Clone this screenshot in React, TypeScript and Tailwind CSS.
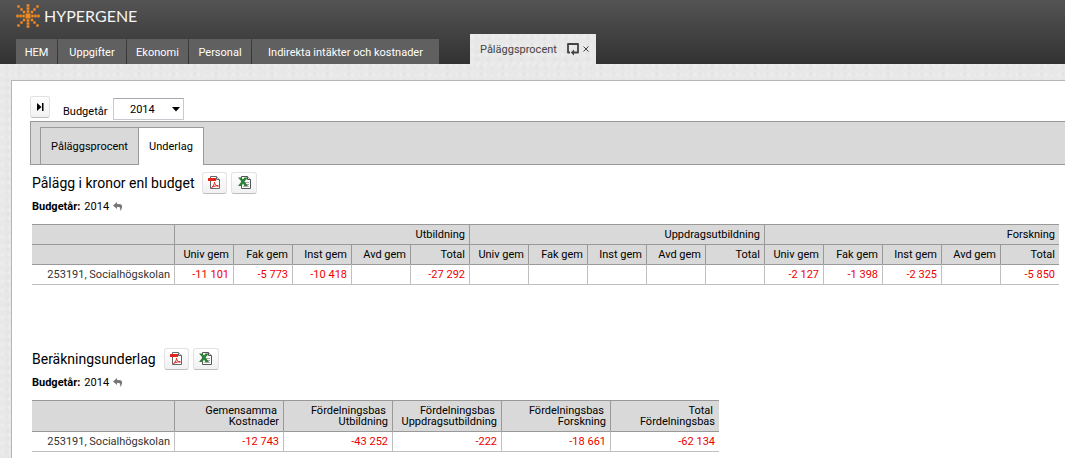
const NAV = [
  { label: 'HEM', width: 'min-w-[41px]' },
  { label: 'Uppgifter', width: 'min-w-[68px]' },
  { label: 'Ekonomi', width: 'min-w-[61px]' },
  { label: 'Personal', width: 'min-w-[62px]' },
  { label: 'Indirekta intäkter och kostnader', width: 'min-w-[187px]' },
]

const GROUPS = [
  { label: 'Utbildning', values: ['-11 101', '-5 773', '-10 418', '', '-27 292'] },
  { label: 'Uppdragsutbildning', values: ['', '', '', '', ''] },
  { label: 'Forskning', values: ['-2 127', '-1 398', '-2 325', '', '-5 850'] },
]

const COLUMNS = ['Univ gem', 'Fak gem', 'Inst gem', 'Avd gem', 'Total']

const BASIS = [
  { lines: ['Gemensamma', 'Kostnader'], value: '-12 743' },
  { lines: ['Fördelningsbas', 'Utbildning'], value: '-43 252' },
  { lines: ['Fördelningsbas', 'Uppdragsutbildning'], value: '-222' },
  { lines: ['Fördelningsbas', 'Forskning'], value: '-18 661' },
  { lines: ['Total', 'Fördelningsbas'], value: '-62 134' },
]

const TEXTURE =
  'bg-[#e8e8e8] bg-[radial-gradient(circle_at_30%_30%,#f0f0f080_1px,transparent_3px),radial-gradient(circle_at_70%_60%,#dededf80_1px,transparent_3px)] bg-[size:7px_9px,11px_7px]'

const ICON_BUTTON =
  'flex h-[22px] items-center justify-center rounded-[3px] border border-[#e2e2e2] border-b-[#bdbdbd] bg-linear-to-b from-white to-[#f1f1f1]'

const HEAD_CELL = 'border-t border-l border-[#999] bg-[#d9d9d9] px-1 font-normal'
const BODY_CELL = 'border-y border-l border-[#c0c0c0] border-t-[#999] px-1 text-[#ee0000]'

// Offsets of the dots on one straight and one diagonal ray
const STRAIGHT = [4.5, 7.5, 10.5]
const DIAGONAL = [4, 6.5, 9.5]

function Logo() {
  return (
    <svg width="24" height="24" viewBox="-12 -12 24 24" fill="#f58a1f" aria-hidden="true">
      <rect x="-2.5" y="-2.5" width="5" height="5" />
      {[0, 90, 180, 270].map((angle) => (
        <g key={angle} transform={`rotate(${angle})`}>
          {STRAIGHT.map((d) => (
            <rect key={d} x={d - 1.2} y="-1.4" width="2.4" height="2.8" />
          ))}
          {DIAGONAL.map((d) => (
            <rect key={d} x={d - 1.2} y={d - 1.2} width="2.400" height="2.400" />
          ))}
        </g>
      ))}
    </svg>
  )
}

function PdfIcon() {
  return (
    <svg width="13" height="14" viewBox="0 0 13 14" aria-hidden="true">
      <path d="M2.5.5h6l3 3v9h-9z" fill="#fff" stroke="#666" />
      <path d="M8.5.5v3h3" fill="#ddd" stroke="#666" />
      <path d="M0 2h8v3H0z" fill="#e5231b" />
      <path d="M3.500 11.500c2-1.500 3-3.500 3-5.500 0 2 1.500 4 4 4-2-.5-5 .2-7 1.500z" fill="none" stroke="#e5231b" />
    </svg>
  )
}

function ExcelIcon() {
  return (
    <svg width="13" height="14" viewBox="0 0 13 14" aria-hidden="true">
      <path d="M3.500.5h6l3 3v9h-9z" fill="#fff" stroke="#555" />
      <path d="M9.500.5v3h3" fill="#ddd" stroke="#555" />
      <path d="M7 6.500h4M7 8.500h4M5 10.500h6" stroke="#aaa" />
      <path d="M0 1.500h3.500L5 3.500l1.500-2H10L6.500 5.500 10 10H6.500L5 7.500 3.500 10H0l3.500-4.500z" fill="#2b8138" />
    </svg>
  )
}

function Section({ title, children }: { title: string; children: React.ReactNode }) {
  return (
    <section>
      <div className="flex h-[22px] items-center">
        <h2 className="mr-2 text-[14px]">{title}</h2>
        <button aria-label="PDF" className={`${ICON_BUTTON} mr-1 w-[25px]`}>
          <PdfIcon />
        </button>
        <button aria-label="Excel" className={`${ICON_BUTTON} w-[26px]`}>
          <ExcelIcon />
        </button>
      </div>
      <p className="mt-[3px] mb-[9px] flex h-[18px] items-center gap-1">
        <b className="font-bold">Budgetår:</b>
        <span>2014</span>
        <button aria-label="Återställ">
          <svg width="10" height="9" viewBox="0 0 10 9" aria-hidden="true">
            <path d="M4 0v2h2c2.500 0 3.500 1.500 3 3.500C8.800 7 8 8 7 9c.5-2 .5-4-1.500-4H4v2L0 3.500z" fill="#777" />
          </svg>
        </button>
      </p>
      {children}
    </section>
  )
}

export default function App() {
  return (
    <div className={`flex min-h-screen flex-col overflow-x-hidden font-[Roboto,sans-serif] text-[11px] leading-[13px] text-black ${TEXTURE}`}>
      <header className="bg-linear-to-b from-[#545454] to-[#323232] pl-4">
        <a href="#" className="flex h-[34px] items-center gap-1 pb-[2px] text-[#f4f4f4]">
          <Logo />
          <span className="font-[Lato,sans-serif] text-[16px] leading-4">HYPERGENE</span>
        </a>
        <div className="flex items-end">
          <nav className="flex gap-px">
            {NAV.map((item) => (
              <a
                key={item.label}
                href="#"
                className={`flex h-[25px] items-center justify-center bg-[#606060] pt-px text-white ${item.width}`}
              >
                {item.label}
              </a>
            ))}
          </nav>
          <div className={`ml-[31px] flex h-[30px] w-[126px] items-center pl-[10px] text-[#444] ${TEXTURE}`}>
            <a href="#" className="w-[87px]">Påläggsprocent</a>
            <button aria-label="Öppna i nytt fönster">
              <svg width="12" height="13" viewBox="0 0 12 13" fill="none" aria-hidden="true">
                <path d="M3 9.500H1V1h10v8.500H6" stroke="#444" strokeWidth="1.800" strokeLinejoin="round" />
                <path d="M7 6.500v6L3.800 9.500z" fill="#444" />
              </svg>
            </button>
            <button aria-label="Stäng" className="ml-1">
              <svg width="6" height="6" viewBox="0 0 6 6" stroke="#444" aria-hidden="true">
                <path d="M.5.5l5 5M5.500.5l-5 5" />
              </svg>
            </button>
          </div>
        </div>
      </header>

      <main className="mt-4 ml-[11px] flex-1 border-t border-l border-[#b5b5b5] bg-white pt-[15px] pl-[18px]">
        <div className="flex items-start">
          <button aria-label="Visa filter" className={`${ICON_BUTTON} w-5`}>
            <svg width="7" height="8" viewBox="0 0 7 8" aria-hidden="true">
              <path d="M0 0l4.500 4L0 8zM5 0h1.500v8H5z" />
            </svg>
          </button>
          <label htmlFor="year" className="mt-[9px] ml-[13px] w-[50px]">Budgetår</label>
          <div className="relative mt-[2px] mb-px">
            <select
              id="year"
              className="h-[22px] w-[71px] appearance-none border border-[#c9c9d2] border-t-[#a8a8b0] bg-white pl-4"
            >
              <option>2014</option>
            </select>
            <svg className="pointer-events-none absolute top-[9px] right-1" width="8" height="5" viewBox="0 0 8 5" aria-hidden="true">
              <path d="M0 0h8L4 4.500z" />
            </svg>
          </div>
        </div>

        <div className="flex h-11 items-end border border-r-0 border-[#999] bg-[#d9d9d9] pl-[9px]">
          <a href="#" className="flex h-[37px] w-[98px] items-center justify-center border-t border-l border-[#999]">
            Påläggsprocent
          </a>
          <a href="#" className="-mb-px flex h-[38px] w-[66px] items-center justify-center border border-b-0 border-[#999] bg-white">
            Underlag
          </a>
        </div>

        <div className="flex flex-col gap-[63px] pt-[7px] pr-[6px] pb-2 pl-[2px]">
          <Section title="Pålägg i kronor enl budget">
            <table className="w-full table-fixed border-separate border-spacing-0 text-right">
              <colgroup>
                <col className="w-[142px]" />
                <col span={15} />
              </colgroup>
              <thead>
                <tr className="h-5">
                  <td className="border-t border-[#999] bg-[#d9d9d9]" />
                  {GROUPS.map((group) => (
                    <th key={group.label} colSpan={5} className={HEAD_CELL}>
                      {group.label}
                    </th>
                  ))}
                </tr>
                <tr className="h-5">
                  <td className="border-t border-[#999] bg-[#d9d9d9]" />
                  {GROUPS.map((group) =>
                    COLUMNS.map((column) => (
                      <th key={group.label + column} className={HEAD_CELL}>
                        {column}
                      </th>
                    )),
                  )}
                </tr>
              </thead>
              <tbody>
                <tr className="h-[21px]">
                  <th className="border-y border-[#c0c0c0] border-t-[#999] pr-1 font-normal text-[#333]">
                    253191, Socialhögskolan
                  </th>
                  {GROUPS.map((group) =>
                    group.values.map((value, i) => (
                      <td key={group.label + i} className={BODY_CELL}>
                        {value}
                      </td>
                    )),
                  )}
                </tr>
              </tbody>
            </table>
          </Section>

          <Section title="Beräkningsunderlag">
            <table className="w-[687px] table-fixed border-separate border-spacing-0 text-right">
              <colgroup>
                <col className="w-[142px]" />
                <col span={5} />
              </colgroup>
              <thead>
                <tr className="h-[31px] leading-[11px]">
                  <td className="border-t border-[#999] bg-[#d9d9d9]" />
                  {BASIS.map((item) => (
                    <th key={item.lines.join(' ')} className={HEAD_CELL}>
                      <span className="block pr-[2px]">{item.lines[0]}</span>
                      <span className="block">{item.lines[1]}</span>
                    </th>
                  ))}
                </tr>
              </thead>
              <tbody>
                <tr className="h-[21px]">
                  <th className="border-y border-[#c0c0c0] border-t-[#999] pr-1 font-normal text-[#333]">
                    253191, Socialhögskolan
                  </th>
                  {BASIS.map((item) => (
                    <td key={item.lines.join(' ')} className={BODY_CELL}>
                      {item.value}
                    </td>
                  ))}
                </tr>
              </tbody>
            </table>
          </Section>
        </div>
      </main>
    </div>
  )
}
